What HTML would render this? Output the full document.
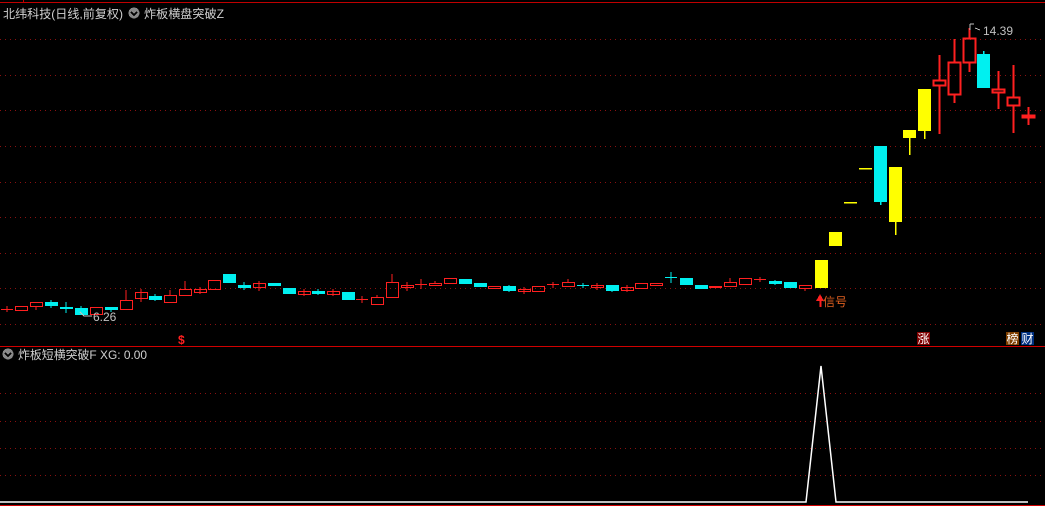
<!DOCTYPE html>
<html><head><meta charset="utf-8"><style>
html,body{margin:0;padding:0;background:#000;width:1045px;height:506px;overflow:hidden}
svg{display:block}
text{font-family:"Liberation Sans","Noto Sans CJK SC",sans-serif}
</style></head><body>
<svg width="1045" height="506" viewBox="0 0 1045 506" xmlns="http://www.w3.org/2000/svg" shape-rendering="crispEdges">
<rect width="1045" height="506" fill="#000"/>
<line x1="0" y1="2.5" x2="1045" y2="2.5" stroke="#c00000"/>
<line x1="23.5" y1="0" x2="23.5" y2="3" stroke="#c00000"/>
<g stroke="#8a1010" stroke-dasharray="1,4">
<line x1="0" y1="39.5" x2="1045" y2="39.5"/>
<line x1="0" y1="75.5" x2="1045" y2="75.5"/>
<line x1="0" y1="110.5" x2="1045" y2="110.5"/>
<line x1="0" y1="146.5" x2="1045" y2="146.5"/>
<line x1="0" y1="182.5" x2="1045" y2="182.5"/>
<line x1="0" y1="217.5" x2="1045" y2="217.5"/>
<line x1="0" y1="253.5" x2="1045" y2="253.5"/>
<line x1="0" y1="288.5" x2="1045" y2="288.5"/>
<line x1="0" y1="324.5" x2="1045" y2="324.5"/>
<line x1="0" y1="393.5" x2="1045" y2="393.5"/>
<line x1="0" y1="421.5" x2="1045" y2="421.5"/>
<line x1="0" y1="448.5" x2="1045" y2="448.5"/>
<line x1="0" y1="475.5" x2="1045" y2="475.5"/>
</g>
<line x1="0" y1="346.5" x2="1045" y2="346.5" stroke="#d00000"/>
<line x1="0" y1="505.5" x2="1045" y2="505.5" stroke="#d00000"/>

<text x="3" y="18" font-size="12" fill="#d0d0d0" textLength="120" lengthAdjust="spacingAndGlyphs">北纬科技(日线,前复权)</text>
<circle cx="134" cy="13" r="5.5" fill="#888"/>
<path d="M131 12 L134 15 L137 12" stroke="#000" stroke-width="1.5" fill="none"/>
<text x="144" y="18" font-size="12" fill="#d0d0d0" textLength="80" lengthAdjust="spacingAndGlyphs">炸板横盘突破Z</text>

<circle cx="8" cy="354" r="5.5" fill="#888"/>
<path d="M5 353 L8 356 L11 353" stroke="#000" stroke-width="1.5" fill="none"/>
<text x="18" y="359" font-size="12" fill="#d0d0d0" textLength="129" lengthAdjust="spacingAndGlyphs">炸板短横突破F XG: 0.00</text>

<g stroke-width="1.4">
<g stroke="#ff2020" fill="none">
<line x1="1" y1="309.5" x2="13" y2="309.5"/><line x1="7" y1="306" x2="7" y2="312"/>
<rect x="15.5" y="306.5" width="12" height="4"/>
<rect x="30.5" y="302.5" width="12" height="4"/><line x1="36" y1="306" x2="36" y2="310"/>
<rect x="90.5" y="307.5" width="12" height="7"/>
<rect x="120.5" y="300.5" width="12" height="9"/><line x1="126" y1="290" x2="126" y2="300"/>
<rect x="135.5" y="292.5" width="12" height="6"/><line x1="141" y1="289" x2="141" y2="302"/>
<rect x="164.5" y="295.5" width="12" height="7"/><line x1="170" y1="290" x2="170" y2="295"/>
<rect x="179.5" y="289.5" width="12" height="6"/><line x1="185" y1="281" x2="185" y2="289"/>
<rect x="194.5" y="289.5" width="12" height="3"/><line x1="200" y1="287" x2="200" y2="294"/>
<rect x="208.5" y="280.5" width="12" height="9"/>
<rect x="253.5" y="283.5" width="12" height="4"/><line x1="259" y1="281" x2="259" y2="291"/>
<rect x="298.5" y="291.5" width="12" height="3"/><line x1="304" y1="289" x2="304" y2="296"/>
<rect x="327.5" y="291.5" width="12" height="3"/><line x1="333" y1="289" x2="333" y2="296"/>
<line x1="356" y1="299.5" x2="368" y2="299.5"/><line x1="362" y1="296" x2="362" y2="303"/>
<rect x="371.5" y="297.5" width="12" height="7"/><line x1="377" y1="295" x2="377" y2="297"/>
<rect x="386.5" y="282.5" width="12" height="15"/><line x1="392" y1="274" x2="392" y2="282"/>
<rect x="401.5" y="285.5" width="12" height="2"/><line x1="407" y1="282" x2="407" y2="291"/>
<line x1="415" y1="284.5" x2="427" y2="284.5"/><line x1="421" y1="279" x2="421" y2="289"/>
<rect x="429.5" y="283.5" width="12" height="2"/><line x1="435" y1="281" x2="435" y2="283"/>
<rect x="444.5" y="278.5" width="12" height="5"/>
<rect x="488.5" y="286.5" width="12" height="2"/>
<rect x="518.5" y="289.5" width="12" height="2"/><line x1="524" y1="287" x2="524" y2="294"/>
<rect x="532.5" y="286.5" width="12" height="5"/>
<line x1="547" y1="284.5" x2="559" y2="284.5"/><line x1="553" y1="282" x2="553" y2="288"/>
<rect x="562.5" y="282.5" width="12" height="4"/><line x1="568" y1="279" x2="568" y2="282"/>
<rect x="591.5" y="285.5" width="12" height="2"/><line x1="597" y1="283" x2="597" y2="290"/>
<rect x="621.5" y="287.5" width="12" height="3"/><line x1="627" y1="285" x2="627" y2="292"/>
<rect x="635.5" y="283.5" width="12" height="5"/>
<rect x="650.5" y="283.5" width="12" height="2"/>
<rect x="709.5" y="286.5" width="12" height="1"/>
<rect x="724.5" y="282.5" width="12" height="4"/><line x1="730" y1="278" x2="730" y2="282"/>
<rect x="739.5" y="278.5" width="12" height="6"/>
<line x1="754" y1="279.5" x2="766" y2="279.5"/><line x1="760" y1="277" x2="760" y2="282"/>
<rect x="799.5" y="285.5" width="12" height="3"/><line x1="805" y1="288" x2="805" y2="291"/>
</g>
<g fill="#00f0f0" stroke="#00f0f0">
<rect x="45.5" y="302.5" width="12" height="3"/><line x1="51" y1="300" x2="51" y2="308"/>
<rect x="60.5" y="307.5" width="12" height="1"/><line x1="66" y1="302" x2="66" y2="313"/>
<rect x="75.5" y="308.5" width="12" height="6"/><line x1="81" y1="306" x2="81" y2="308"/>
<rect x="105.5" y="307.5" width="12" height="2"/><line x1="111" y1="309" x2="111" y2="312"/>
<rect x="149.5" y="296.5" width="12" height="3"/><line x1="155" y1="294" x2="155" y2="301"/>
<rect x="223.5" y="274.5" width="12" height="8"/>
<rect x="238.5" y="285.5" width="12" height="2"/><line x1="244" y1="282" x2="244" y2="290"/>
<rect x="268.5" y="283.5" width="12" height="2"/>
<rect x="283.5" y="288.5" width="12" height="5"/>
<rect x="312.5" y="291.5" width="12" height="2"/><line x1="318" y1="289" x2="318" y2="295"/>
<rect x="342.5" y="292.5" width="12" height="7"/>
<rect x="459.5" y="279.5" width="12" height="4"/>
<rect x="474.5" y="283.5" width="12" height="3"/>
<rect x="503.5" y="286.5" width="12" height="4"/><line x1="509" y1="285" x2="509" y2="292"/>
<line x1="577" y1="285.5" x2="589" y2="285.5"/><line x1="583" y1="283" x2="583" y2="288"/>
<rect x="606.5" y="285.5" width="12" height="5"/><line x1="612" y1="290" x2="612" y2="292"/>
<line x1="665" y1="277.5" x2="677" y2="277.5"/><line x1="671" y1="272" x2="671" y2="283"/>
<rect x="680.5" y="278.5" width="12" height="6"/>
<rect x="695.5" y="285.5" width="12" height="3"/>
<rect x="769.5" y="281.5" width="12" height="2"/><line x1="775" y1="280" x2="775" y2="285"/>
<rect x="784.5" y="282.5" width="12" height="5"/>
</g>
</g>

<g fill="#ffff00">
<rect x="815" y="260" width="13" height="28"/>
<rect x="829" y="232" width="13" height="14"/>
<rect x="844" y="202" width="13" height="1.5"/>
<rect x="859" y="168" width="13" height="1.5"/>
<rect x="889" y="167" width="13" height="55"/>
<rect x="895" y="222" width="1.5" height="13"/>
<rect x="903" y="130" width="13" height="8"/>
<rect x="909" y="138" width="1.5" height="17"/>
<rect x="918" y="89" width="13" height="42"/>
<rect x="924" y="131" width="1.5" height="8"/>
</g>
<g fill="#00f0f0">
<rect x="874" y="146" width="13" height="56"/>
<rect x="880" y="202" width="1.5" height="3"/>
<rect x="977" y="54" width="13" height="34"/>
<rect x="983" y="51" width="1.5" height="3"/>
</g>
<g stroke="#ff2020" stroke-width="1.6" fill="none">
<rect x="933.5" y="80.5" width="12" height="5"/><line x1="939.5" y1="55" x2="939.5" y2="80"/><line x1="939.5" y1="86" x2="939.5" y2="134"/>
<rect x="948.5" y="62.5" width="12" height="32"/><line x1="954.5" y1="39" x2="954.5" y2="62"/><line x1="954.5" y1="95" x2="954.5" y2="103"/>
<rect x="963.5" y="38.5" width="12" height="24"/><line x1="969.5" y1="28" x2="969.5" y2="38"/><line x1="969.5" y1="63" x2="969.5" y2="72"/>
<rect x="992.5" y="89.5" width="12" height="3"/><line x1="998.5" y1="71" x2="998.5" y2="89"/><line x1="998.5" y1="93" x2="998.5" y2="109"/>
<rect x="1007.5" y="97.5" width="12" height="8"/><line x1="1013.5" y1="65" x2="1013.5" y2="97"/><line x1="1013.5" y1="106" x2="1013.5" y2="133"/>
<rect x="1022.5" y="115.5" width="12" height="2"/><line x1="1028.5" y1="107" x2="1028.5" y2="115"/><line x1="1028.5" y1="118" x2="1028.5" y2="125"/>
</g>

<path d="M970 24 L970 30 M970 24 L974 24 M975 28 L980 30" stroke="#c0c0c0" fill="none"/>
<text x="983" y="35" font-size="12" fill="#c0c0c0">14.39</text>
<path d="M80 312 L84 316 L92 316" stroke="#c0c0c0" fill="none"/>
<text x="93" y="321" font-size="12" fill="#c0c0c0">6.26</text>
<path d="M816 301 L820 294 L824 301 Z" fill="#ff2020"/>
<rect x="819.5" y="299" width="2" height="8" fill="#ff2020"/>
<text x="823" y="306" font-size="12" fill="#e06020">信号</text>
<text x="178" y="344" font-size="12" font-weight="bold" fill="#ff2020">$</text>
<rect x="917" y="332" width="13" height="13" fill="#800000"/>
<text x="917.5" y="343" font-size="12" fill="#fff">涨</text>
<rect x="1006" y="332" width="13" height="13" fill="#804000"/>
<text x="1006.5" y="343" font-size="12" fill="#fff">榜</text>
<rect x="1021" y="332" width="13" height="13" fill="#003080"/>
<text x="1021.5" y="343" font-size="12" fill="#fff">财</text>

<polyline points="0,502 806,502 821,366 836,502 1028,502" stroke="#fff" stroke-width="1.5" fill="none" shape-rendering="auto"/>
</svg>
</body></html>
